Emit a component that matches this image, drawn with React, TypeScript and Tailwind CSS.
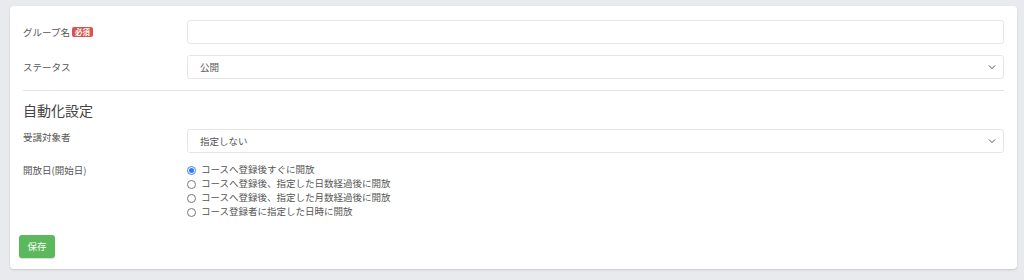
import React from "react";

const font = { fontFamily: '"Noto Sans CJK JP", "Noto Sans", sans-serif' };

function Chevron() {
  return (
    <svg width="10" height="10" viewBox="0 0 16 16" className="absolute right-[6px] top-1/2 -translate-y-1/2" fill="none" stroke="#555" strokeWidth="1.6" strokeLinecap="round" strokeLinejoin="round">
      <path d="M3.5 6l4.5 4.5L12.5 6" />
    </svg>
  );
}

function Select({ value }: { value: string }) {
  return (
    <div className="relative flex-1 h-[24px] border border-[#e6e6e6] rounded-[3px] bg-white flex items-center pl-[12px] text-[9.5px] text-[#555]">
      {value}
      <Chevron />
    </div>
  );
}

function Radio({ checked, label }: { checked?: boolean; label: string }) {
  return (
    <div className="flex items-center h-[14px]">
      {checked ? (
        <span className="w-[9px] h-[9px] rounded-full border border-[#3b82f6] bg-white flex items-center justify-center">
          <span className="w-[5px] h-[5px] rounded-full bg-[#3478f6]" />
        </span>
      ) : (
        <span className="w-[9px] h-[9px] rounded-full border border-[#777] bg-white" />
      )}
      <span className="ml-[5px] text-[9.5px] text-[#555] leading-none">{label}</span>
    </div>
  );
}

export default function App() {
  return (
    <div className="w-[1024px] h-[280px] bg-[#e9eaed] pt-[6px] pl-[10px] pr-[7px]" style={font}>
      <div className="bg-white rounded-[4px] shadow-[0_1px_2px_rgba(0,0,0,0.15)] px-[13px] pt-[14px] pb-[11px]">
        <div className="flex items-center h-[24px]">
          <div className="w-[164px] flex items-center text-[9.5px] text-[#555]">
            グループ名
            <span className="ml-[2px] bg-[#d9534f] text-white text-[7.5px] font-bold rounded-[2px] px-[3px] h-[10px] leading-[10px]">必須</span>
          </div>
          <div className="flex-1 h-[24px] border border-[#e6e6e6] rounded-[3px] bg-white" />
        </div>
        <div className="flex items-center h-[24px] mt-[11px]">
          <div className="w-[164px] text-[9.5px] text-[#555]">ステータス</div>
          <Select value="公開" />
        </div>
        <div className="mt-[11px] border-t border-[#e3e3e3]" />
        <div className="mt-[9px] text-[14px] leading-[20px] text-[#444]">自動化設定</div>
        <div className="flex mt-[9px]">
          <div className="w-[164px] text-[9.5px] text-[#555] pt-[2px] leading-[12px]">受講対象者</div>
          <Select value="指定しない" />
        </div>
        <div className="flex mt-[10px]">
          <div className="w-[164px] text-[9.5px] text-[#555] h-[14px] flex items-center">開放日(開始日)</div>
          <div className="flex flex-col">
            <Radio checked label="コースへ登録後すぐに開放" />
            <Radio label="コースへ登録後、指定した日数経過後に開放" />
            <Radio label="コースへ登録後、指定した月数経過後に開放" />
            <Radio label="コース登録者に指定した日時に開放" />
          </div>
        </div>
        <button className="mt-[16px] -ml-[4px] w-[36px] h-[23px] bg-[#5cb85c] rounded-[3px] text-white text-[9.5px] flex items-center justify-center shadow-[0_1px_1px_rgba(0,0,0,0.15)]">
          保存
        </button>
      </div>
    </div>
  );
}
